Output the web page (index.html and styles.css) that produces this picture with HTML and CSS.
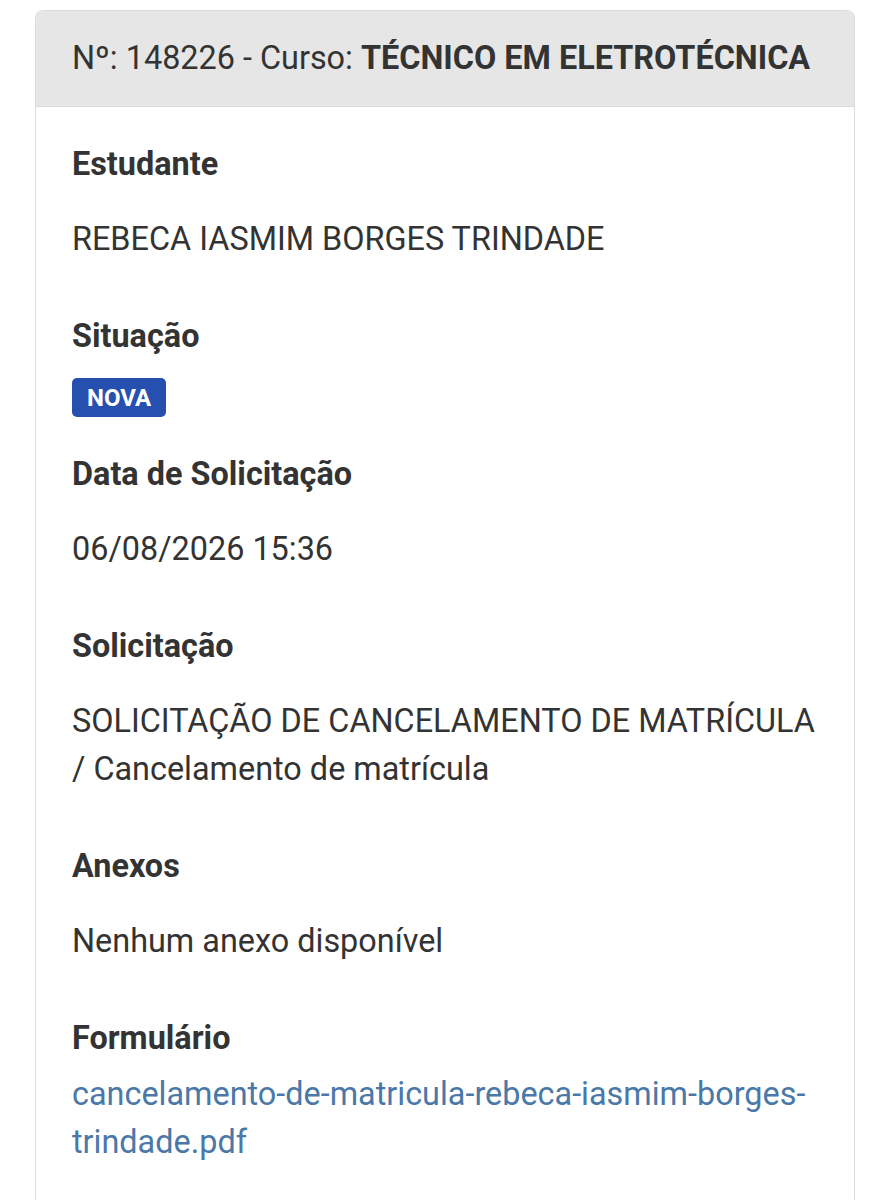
FILE: index.html
```html
<!DOCTYPE html>
<html lang="pt-BR">
<head>
<meta charset="utf-8">
<title>Solicitação 148226</title>
<link rel="stylesheet" href="styles.css">
</head>
<body>
<div class="card">
  <div class="card-header">Nº: 148226 - Curso: <strong>TÉCNICO EM ELETROTÉCNICA</strong></div>
  <div class="card-body">
    <div class="field">
      <div class="label">Estudante</div>
      <div class="value">REBECA IASMIM BORGES TRINDADE</div>
    </div>
    <div class="field field-badge">
      <div class="label">Situação</div>
      <div class="value"><span class="badge">NOVA</span></div>
    </div>
    <div class="field">
      <div class="label">Data de Solicitação</div>
      <div class="value">06/08/2026 15:36</div>
    </div>
    <div class="field">
      <div class="label">Solicitação</div>
      <div class="value">SOLICITAÇÃO DE CANCELAMENTO DE MATRÍCULA / Cancelamento de matrícula</div>
    </div>
    <div class="field">
      <div class="label">Anexos</div>
      <div class="value">Nenhum anexo disponível</div>
    </div>
    <div class="field field-link">
      <div class="label">Formulário</div>
      <div class="value"><a href="#" class="file-link">cancelamento-de-matricula-rebeca-iasmim-borges-trindade.pdf</a></div>
    </div>
  </div>
</div>
</body>
</html>
```

FILE: styles.css
```css
html, body {
  margin: 0;
  padding: 0;
  background: #ffffff;
}
body {
  font-family: Roboto, "Liberation Sans", Arial, sans-serif;
  font-size: 32.4px;
  line-height: 48px;
  color: #333333;
  padding: 10px 24px 0 35px;
}
.card {
  border: 1px solid #dddddd;
  border-bottom: none;
  border-radius: 8px 8px 0 0;
  overflow: hidden;
  min-height: 1200px;
}
.card-header {
  background: #e6e6e6;
  border-bottom: 1px solid #dcdcdc;
  padding: 23px 36px 24px;
  color: #333333;
}
.card-header strong {
  font-weight: 700;
}
.card-body {
  padding: 33px 36px 0;
}
.field {
  margin-bottom: 49px;
}
.label {
  font-weight: 700;
  margin-bottom: 27px;
}
.field-badge {
  margin-bottom: 33px;
}
.field-badge .label {
  margin-bottom: 18px;
}
.field-badge .value {
  line-height: 0;
}
.badge {
  display: inline-block;
  background: #2550b0;
  color: #ffffff;
  font-weight: 700;
  font-size: 24px;
  line-height: 24px;
  padding: 8px 15px 7px;
  border-radius: 5px;
}
.field-link .label {
  margin-bottom: 8px;
}
.file-link {
  color: #4a78a8;
  text-decoration: none;
}
```
